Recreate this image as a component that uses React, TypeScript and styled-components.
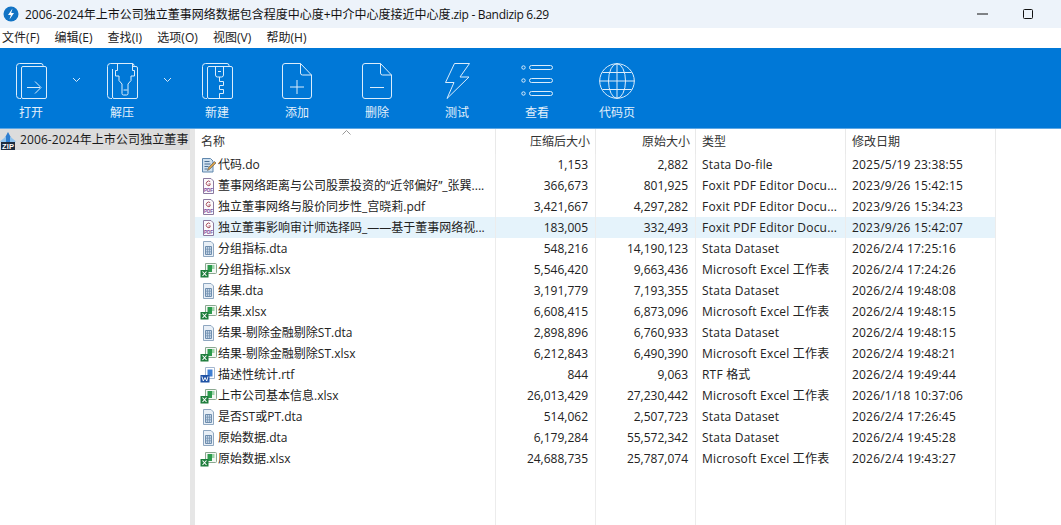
import React from "react";
import styled, { createGlobalStyle } from "styled-components";

const Global = createGlobalStyle`
  html, body { margin: 0; padding: 0; background: #fff; overflow: hidden; }
  body { font-family: "Open Sans", "Noto Sans CJK SC", sans-serif; color: #1a1a1a; }
`;
const Window = styled.div`
  width: 1061px; height: 525px; display: flex; flex-direction: column; overflow: hidden; background: #fff;
`;
const TitleBar = styled.div`
  height: 28px; flex: none; background: #edf3fa; display: flex; align-items: center; padding-left: 3px;
`;
const TitleText = styled.div`
  font-size: 12px; margin-left: 6px; flex: 1; white-space: nowrap; color: #111;
`;
const TitleTail = styled.span`
  letter-spacing: -0.3px;
`;
const WinButton = styled.div<{ $w?: number }>`
  width: ${(p) => p.$w ?? 46}px; height: 28px; display: flex; align-items: center; justify-content: center; flex: none;
`;
const MenuBar = styled.div`
  height: 20px; flex: none; display: flex; align-items: center; background: #fff; padding: 0 0 2px 2px; box-sizing: border-box; gap: 15px;
`;
const MenuItem = styled.span`
  font-size: 12px; letter-spacing: 0.05px; color: #222; white-space: nowrap;
`;
const Toolbar = styled.div`
  height: 80px; flex: none; background: #0078d7; display: flex; align-items: flex-start; border-bottom: 1px solid #5fa8e4; box-sizing: content-box;
`;
const ToolButton = styled.div<{ $w: number; $after?: number }>`
  width: ${(p) => p.$w}px; margin-right: ${(p) => p.$after ?? 0}px; flex: none; height: 80px; display: flex; flex-direction: column; align-items: center; padding-top: 15px; box-sizing: border-box;
`;
const IconSlot = styled.div`
  height: 36px; display: flex; align-items: flex-start; justify-content: center;
`;
const ToolLabel = styled.span`
  font-size: 12px; line-height: 16px; margin-top: 6px; color: #e3f0fb;
`;
const Chevron = styled.div<{ $w: number }>`
  width: ${(p) => p.$w}px; flex: none; height: 80px; display: flex; justify-content: center; padding-top: 29px; box-sizing: border-box;
`;
const Main = styled.div`
  flex: 1; display: flex; min-height: 0;
`;
const TreePane = styled.div`
  width: 190px; flex: none; background: #fff; overflow: hidden;
`;
const TreeRow = styled.div`
  height: 21px; display: flex; align-items: center; background: #dcdcdc; overflow: hidden; white-space: nowrap; font-size: 12px; letter-spacing: 0.1px; color: #1a1a1a;
  & > svg { flex: none; }
`;
const TreeLabel = styled.span`
  margin-left: 4px; flex: none; width: 170px; overflow: hidden; padding-bottom: 2px;
`;
const Splitter = styled.div`
  width: 5px; flex: none; background: #e6e6e6;
`;
const ListPane = styled.div`
  flex: 1; display: flex; flex-direction: column; position: relative; min-width: 0;
`;
const cols = "301px 100px 100px 150px 150px";
const HeaderRow = styled.div`
  display: grid; grid-template-columns: ${cols}; height: 25px; flex: none;
`;
const HeaderCell = styled.div<{ $right?: boolean }>`
  font-size: 12px; color: #333; display: flex; align-items: center; box-sizing: border-box; padding: 0 5px 2px 6px;
  justify-content: ${(p) => (p.$right ? "flex-end" : "flex-start")};
  border-right: 1px solid #e9e9e9;
`;
const SortArrow = styled.svg`
  position: absolute; left: 147px; top: 1px;
`;
const Body = styled.div`
  flex: 1; display: grid; grid-template-columns: ${cols}; grid-auto-rows: 21px; align-content: start; position: relative;
`;
const Lines = styled.div`
  position: absolute; inset: 0; display: grid; grid-template-columns: ${cols}; pointer-events: none;
  & > div { border-right: 1px solid #ececec; }
`;
const Row = styled.div<{ $on?: boolean }>`
  display: grid; grid-column: 1 / -1; grid-template-columns: subgrid; background: ${(p) => (p.$on ? "#e5f3fb" : "transparent")};
`;
const NameCell = styled.div`
  display: flex; align-items: center; padding-left: 6px; font-size: 12px; color: #222; white-space: nowrap; overflow: hidden; min-width: 0;
  & > svg { flex: none; }
  & > svg[width="17"] { margin-left: -1px; }
`;
const NameText = styled.span`
  margin-left: 1px; padding-bottom: 2px;
`;
const NumCell = styled.div`
  display: flex; align-items: center; justify-content: flex-end; padding: 0 8px 1px 0; font-size: 12px; color: #222;
`;
const TextCell = styled.div`
  display: flex; align-items: center; padding: 0 0 1px 6px; font-size: 12px; letter-spacing: 0.2px; color: #222; white-space: nowrap; overflow: hidden;
`;

const S = { fill: "none", stroke: "#dcedfb", strokeWidth: 1 } as const;

const Sheets = () => (
  <>
    <path d="M5 35.500H3.500a3 3 0 0 1-3-3V3.500a3 3 0 0 1 3-3H25a2 2 0 0 1 2 2V4" />
    <rect x="5.500" y="3.500" width="25" height="32" rx="1.500" />
  </>
);
const IconOpen = () => (
  <svg width="31" height="36" viewBox="0 0 31 36" {...S}>
    <Sheets />
    <path d="M11 24.500h13M19 18.500l6 6-6 6" />
  </svg>
);
const IconExtract = () => (
  <svg width="31" height="36" viewBox="0 0 31 36" {...S}>
    <path d="M5 35.500H3.500a3 3 0 0 1-3-3V3.500a3 3 0 0 1 3-3H25a2 2 0 0 1 2 2V4" />
    <path d="M5.500 6v28a1.500 1.500 0 0 0 1.500 1.500h22a1.500 1.500 0 0 0 1.500-1.500V5a1.500 1.500 0 0 0-1.500-1.500H26" />
    <path d="M10.500 .5V7.500h-2V13h3.500v4.500l3 3.500v9.500a1.500 1.500 0 0 0 1.500 1.500h3a1.500 1.500 0 0 0 1.500-1.500V21l3-3.500V13h3.500V7.500h-2V.5" />
    <path d="M16.500 27h4" />
  </svg>
);
const IconNew = () => (
  <svg width="31" height="36" viewBox="0 0 31 36" {...S}>
    <Sheets />
    <path d="M13.500 3.500V12a2 2 0 0 0 2 2h4a2 2 0 0 0 2-2V3.500" />
    <path d="M16 8.500h3" />
    <path d="M17.500 14v4.500h4v4h-4v4h4v4h-4v5" />
  </svg>
);
const IconAdd = () => (
  <svg width="30" height="36" viewBox="0 0 30 36" {...S}>
    <path d="M3 .5h15.500L29.500 12v21a2.500 2.500 0 0 1-2.500 2.500H3A2.500 2.500 0 0 1 .5 33V3A2.500 2.500 0 0 1 3 .5z" />
    <path d="M18.500 .5V10a2 2 0 0 0 2 2h9" />
    <path d="M15 17v14M8 24h14" />
  </svg>
);
const IconDelete = () => (
  <svg width="30" height="36" viewBox="0 0 30 36" {...S}>
    <path d="M3 .5h15.500L29.500 12v21a2.500 2.500 0 0 1-2.500 2.500H3A2.500 2.500 0 0 1 .5 33V3A2.500 2.500 0 0 1 3 .5z" />
    <path d="M18.500 .5V10a2 2 0 0 0 2 2h9" />
    <path d="M8 24.500h14" />
  </svg>
);
const IconTest = () => (
  <svg width="25" height="36" viewBox="0 0 25 36" {...S}>
    <path d="M9.500 .5h15L15 14h9L2 35.500l7-16H.5z" />
  </svg>
);
const IconView = () => (
  <svg width="32" height="36" viewBox="0 0 32 36" {...S}>
    <circle cx="2.500" cy="4.500" r="1.700" />
    <circle cx="2.500" cy="17.500" r="1.700" />
    <circle cx="2.500" cy="30.500" r="1.700" />
    <rect x="8.500" y="2.500" width="23" height="4" rx="2" />
    <rect x="8.500" y="15.500" width="23" height="4" rx="2" />
    <rect x="8.500" y="28.500" width="23" height="4" rx="2" />
  </svg>
);
const IconGlobe = () => (
  <svg width="36" height="36" viewBox="0 0 36 36" {...S}>
    <circle cx="18" cy="18" r="17.300" />
    <ellipse cx="18" cy="18" rx="8.500" ry="17.300" />
    <path d="M18 .5v35M.5 18h35M3.500 9.500h29M3.500 26.500h29" />
  </svg>
);
const ChevronIcon = () => (
  <svg width="9" height="6" viewBox="0 0 9 6" fill="none" stroke="#d6e9fa" strokeWidth="1">
    <path d="M1 1l3.500 3.500L8 1" />
  </svg>
);
const AppLogo = () => (
  <svg width="16" height="16" viewBox="0 0 16 16">
    <circle cx="8" cy="8" r="7.500" fill="#1273c4" />
    <path d="M9.500 2.500L5 9h2.800L6.500 13.500 11 7H8.200z" fill="#fff" />
  </svg>
);
const ZipIcon = () => (
  <svg width="16" height="20" viewBox="0 0 16 20">
    <path d="M8 2l3.500 6.500H4.500z" fill="#2d7ed0" />
    <path d="M.5 11L6 6.500V12H.5zM15.500 11L10 6.500V12h5.500z" fill="#8ec2ee" />
    <rect x="6" y="8" width="4" height="4" fill="#2d7ed0" />
    <rect x="1" y="12" width="14" height="8" fill="#1d2c3f" />
    <text x="8" y="18.800" fontSize="7.500" fontWeight="700" fontFamily="Liberation Sans" textAnchor="middle" fill="#fff">ZIP</text>
  </svg>
);
const DoIcon = () => (
  <svg width="16" height="16" viewBox="0 0 16 16">
    <path d="M1.500 1.500h8l2.500 2.500v11H1.500z" fill="#cfe0ef" stroke="#5f87ad" />
    <path d="M3.500 4.500h5M3.500 7h6M3.500 9.500h4M3.500 12h3" stroke="#4a6f94" />
    <path d="M6.500 13.500l1-3 6-6 1.500 1.500-6 6z" fill="#d8a24a" stroke="#555" strokeWidth=".6" />
  </svg>
);
const PdfIcon = () => (
  <svg width="16" height="16" viewBox="0 0 16 16">
    <path d="M2.500 .5h7.500l2.500 2.500v12.500H2.500z" fill="#fbfafc" stroke="#8b7aa0" />
    <path d="M9.200 3.700a2.300 2.300 0 1 0 .3 3M7.500 6h2.200" fill="none" stroke="#a8505c" strokeWidth="1" />
    <text x="7.500" y="14" fontSize="4.600" fontWeight="700" fontFamily="Liberation Sans" textAnchor="middle" fill="#7a4a9a">PDF</text>
  </svg>
);
const DtaIcon = () => (
  <svg width="16" height="16" viewBox="0 0 16 16">
    <path d="M2.500 .5h7.500l2.500 2.500v12.500H2.500z" fill="#e8eff6" stroke="#8fa7c0" />
    <path d="M4.500 5.500h6v8h-6z" fill="#c5d6e8" stroke="#6f8eae" />
    <path d="M4.500 8.200h6M4.500 10.800h6M6.500 5.500v8M8.500 5.500v8" stroke="#6f8eae" strokeWidth=".7" />
  </svg>
);
const XlsIcon = () => (
  <svg width="17" height="16" viewBox="0 0 17 16">
    <path d="M5.500 1.500h10a1 1 0 0 1 1 1v8a1 1 0 0 1-1 1h-10z" fill="#f4f7f4" stroke="#8aa890" />
    <rect x="7.500" y="3" width="4.500" height="7" fill="#2c9a4c" />
    <rect x="12" y="3" width="2.500" height="4" fill="#9bd5a8" />
    <rect x=".5" y="8" width="8" height="7.500" fill="#1e7d3c" />
    <path d="M2.500 9.500l4 4.500M6.500 9.500l-4 4.500" stroke="#fff" strokeWidth="1.100" />
  </svg>
);
const RtfIcon = () => (
  <svg width="17" height="16" viewBox="0 0 17 16">
    <path d="M5.500 .5h9v11h-9z" fill="#fff" stroke="#a5b7cf" />
    <rect x="7.500" y="2.500" width="5" height="7" fill="#3f7fd3" />
    <rect x=".5" y="8" width="9" height="7.500" fill="#1f52a5" />
    <path d="M2 9.500l1.300 4.500L5 10.500 6.700 14 8 9.500" stroke="#fff" strokeWidth=".9" fill="none" />
  </svg>
);

type Kind = "do" | "pdf" | "dta" | "xls" | "rtf";
const ICONS: Record<Kind, React.FC> = { do: DoIcon, pdf: PdfIcon, dta: DtaIcon, xls: XlsIcon, rtf: RtfIcon };
const FOXIT = "Foxit PDF Editor Docu...";
const XL = "Microsoft Excel 工作表";
const ST = "Stata Dataset";
const files: [Kind, string, string, string, string, string][] = [
  ["do", "代码.do", "1,153", "2,882", "Stata Do-file", "2025/5/19 23:38:55"],
  ["pdf", "董事网络距离与公司股票投资的“近邻偏好”_张巽....", "366,673", "801,925", FOXIT, "2023/9/26 15:42:15"],
  ["pdf", "独立董事网络与股价同步性_宫晓莉.pdf", "3,421,667", "4,297,282", FOXIT, "2023/9/26 15:34:23"],
  ["pdf", "独立董事影响审计师选择吗_——基于董事网络视...", "183,005", "332,493", FOXIT, "2023/9/26 15:42:07"],
  ["dta", "分组指标.dta", "548,216", "14,190,123", ST, "2026/2/4 17:25:16"],
  ["xls", "分组指标.xlsx", "5,546,420", "9,663,436", XL, "2026/2/4 17:24:26"],
  ["dta", "结果.dta", "3,191,779", "7,193,355", ST, "2026/2/4 19:48:08"],
  ["xls", "结果.xlsx", "6,608,415", "6,873,096", XL, "2026/2/4 19:48:15"],
  ["dta", "结果-剔除金融剔除ST.dta", "2,898,896", "6,760,933", ST, "2026/2/4 19:48:15"],
  ["xls", "结果-剔除金融剔除ST.xlsx", "6,212,843", "6,490,390", XL, "2026/2/4 19:48:21"],
  ["rtf", "描述性统计.rtf", "844", "9,063", "RTF 格式", "2026/2/4 19:49:44"],
  ["xls", "上市公司基本信息.xlsx", "26,013,429", "27,230,442", XL, "2026/1/18 10:37:06"],
  ["dta", "是否ST或PT.dta", "514,062", "2,507,723", ST, "2026/2/4 17:26:45"],
  ["dta", "原始数据.dta", "6,179,284", "55,572,342", ST, "2026/2/4 19:45:28"],
  ["xls", "原始数据.xlsx", "24,688,735", "25,787,074", XL, "2026/2/4 19:43:27"],
];

export default function App() {
  return (
    <Window>
      <Global />
      <TitleBar>
        <AppLogo />
        <TitleText>
          2006-2024年上市公司独立董事网络数据包含程度中心度+中介中心度接近中心度<TitleTail>.zip - Bandizip 6.29</TitleTail>
        </TitleText>
        <WinButton>
          <svg width="11" height="2"><path d="M0 1h11" stroke="#111" strokeWidth="1" /></svg>
        </WinButton>
        <WinButton>
          <svg width="10" height="10"><rect x=".5" y=".5" width="9" height="9" rx="1" fill="none" stroke="#111" /></svg>
        </WinButton>
        <WinButton $w={10} />
      </TitleBar>
      <MenuBar>
        {["文件(F)", "编辑(E)", "查找(I)", "选项(O)", "视图(V)", "帮助(H)"].map((m) => (
          <MenuItem key={m}>{m}</MenuItem>
        ))}
      </MenuBar>
      <Toolbar>
        <ToolButton $w={62}><IconSlot><IconOpen /></IconSlot><ToolLabel>打开</ToolLabel></ToolButton>
        <Chevron $w={28}><ChevronIcon /></Chevron>
        <ToolButton $w={64}><IconSlot><IconExtract /></IconSlot><ToolLabel>解压</ToolLabel></ToolButton>
        <Chevron $w={26}><ChevronIcon /></Chevron>
        <ToolButton $w={74} $after={3}><IconSlot><IconNew /></IconSlot><ToolLabel>新建</ToolLabel></ToolButton>
        <ToolButton $w={80}><IconSlot><IconAdd /></IconSlot><ToolLabel>添加</ToolLabel></ToolButton>
        <ToolButton $w={80}><IconSlot><IconDelete /></IconSlot><ToolLabel>删除</ToolLabel></ToolButton>
        <ToolButton $w={80}><IconSlot><IconTest /></IconSlot><ToolLabel>测试</ToolLabel></ToolButton>
        <ToolButton $w={80}><IconSlot><IconView /></IconSlot><ToolLabel>查看</ToolLabel></ToolButton>
        <ToolButton $w={80}><IconSlot><IconGlobe /></IconSlot><ToolLabel>代码页</ToolLabel></ToolButton>
      </Toolbar>
      <Main>
        <TreePane>
          <TreeRow>
            <ZipIcon />
            <TreeLabel>2006-2024年上市公司独立董事</TreeLabel>
          </TreeRow>
        </TreePane>
        <Splitter />
        <ListPane>
          <SortArrow width="9" height="5" viewBox="0 0 9 5" fill="none" stroke="#999">
            <path d="M.5 4.500l4-4 4 4" />
          </SortArrow>
          <HeaderRow>
            <HeaderCell>名称</HeaderCell>
            <HeaderCell $right>压缩后大小</HeaderCell>
            <HeaderCell $right>原始大小</HeaderCell>
            <HeaderCell>类型</HeaderCell>
            <HeaderCell>修改日期</HeaderCell>
          </HeaderRow>
          <Body>
            <Lines><div /><div /><div /><div /><div /></Lines>
            {files.map(([k, n, a, b, t, d], i) => {
              const Ic = ICONS[k];
              return (
                <Row key={n} $on={i === 3}>
                  <NameCell><Ic /><NameText>{n}</NameText></NameCell>
                  <NumCell>{a}</NumCell>
                  <NumCell>{b}</NumCell>
                  <TextCell>{t}</TextCell>
                  <TextCell>{d}</TextCell>
                </Row>
              );
            })}
          </Body>
        </ListPane>
      </Main>
    </Window>
  );
}
